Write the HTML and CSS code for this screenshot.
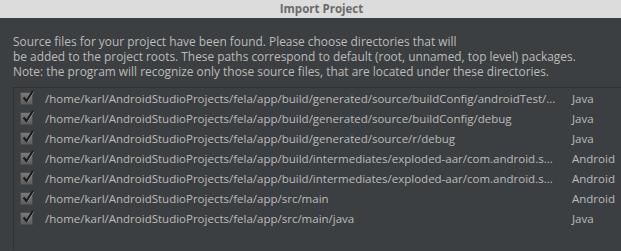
FILE: index.html
```html
<!DOCTYPE html>
<html lang="en">
<head>
    <meta charset="UTF-8">
    <title>Import Project</title>
    <link rel="stylesheet" href="styles.css">
</head>
<body>
    <div class="titlebar">Import Project</div>
    <div class="content">
        <p class="note">Source files for your project have been found. Please choose directories that will<br>
            be added to the project roots. These paths correspond to default (root, unnamed, top level) packages.<br>
            Note: the program will recognize only those source files, that are located under these directories.</p>
        <div class="list">
            <div class="row"><span class="check"></span><span class="path">/home/karl/AndroidStudioProjects/fela/app/build/generated/source/buildConfig/androidTest/...</span><span class="type">Java</span></div>
            <div class="row"><span class="check"></span><span class="path">/home/karl/AndroidStudioProjects/fela/app/build/generated/source/buildConfig/debug</span><span class="type">Java</span></div>
            <div class="row"><span class="check"></span><span class="path">/home/karl/AndroidStudioProjects/fela/app/build/generated/source/r/debug</span><span class="type">Java</span></div>
            <div class="row"><span class="check"></span><span class="path">/home/karl/AndroidStudioProjects/fela/app/build/intermediates/exploded-aar/com.android.s...</span><span class="type">Android</span></div>
            <div class="row"><span class="check"></span><span class="path">/home/karl/AndroidStudioProjects/fela/app/build/intermediates/exploded-aar/com.android.s...</span><span class="type">Android</span></div>
            <div class="row"><span class="check"></span><span class="path">/home/karl/AndroidStudioProjects/fela/app/src/main</span><span class="type">Android</span></div>
            <div class="row"><span class="check"></span><span class="path">/home/karl/AndroidStudioProjects/fela/app/src/main/java</span><span class="type">Java</span></div>
        </div>
    </div>
</body>
</html>
```

FILE: styles.css
```css
* {
    margin: 0;
    padding: 0;
    box-sizing: border-box;
}

body {
    width: 621px;
    height: 251px;
    overflow: hidden;
    background: #3c3f41;
    font-family: "Open Sans", "DejaVu Sans", sans-serif;
    color: #bbbbbb;
}

.titlebar {
    height: 18px;
    line-height: 18px;
    padding-left: 22px;
    background: #dcdcdc;
    color: #6b6b6b;
    font-size: 11.5px;
    font-weight: bold;
    text-align: center;
}

.content {
    padding: 16px 0 0 13px;
}

.note {
    font-size: 11.9px;
    line-height: 15px;
    margin-bottom: 8px;
}

.list {
    border-top: 1px solid #2f3133;
    border-left: 1px solid #2f3133;
    height: 163px;
}

.row {
    display: grid;
    grid-template-columns: 13px 515px 1fr;
    column-gap: 12px;
    align-items: center;
    height: 20px;
    padding-left: 6px;
    font-size: 11.5px;
}

.path {
    white-space: nowrap;
    overflow: hidden;
}

.type {
    white-space: nowrap;
}

.check {
    width: 13px;
    height: 13px;
    border: 1px solid #4c4c4c;
    background: linear-gradient(#7a7a7a, #5e5e5e);
    position: relative;
}

.check::after {
    content: "";
    position: absolute;
    left: 1px;
    top: -3px;
    width: 12px;
    height: 13px;
    background: url("data:image/svg+xml;utf8,<svg xmlns='http://www.w3.org/2000/svg' width='12' height='13' viewBox='0 0 12 13'><polyline points='1.5,7.5 4.5,11 11,1' fill='none' stroke='%23c8c8c8' stroke-width='1' transform='translate(0.8,0.6)'/><polyline points='1.5,7.5 4.5,11 11,1' fill='none' stroke='%231c1c1c' stroke-width='2.2'/></svg>") no-repeat;
}
```
